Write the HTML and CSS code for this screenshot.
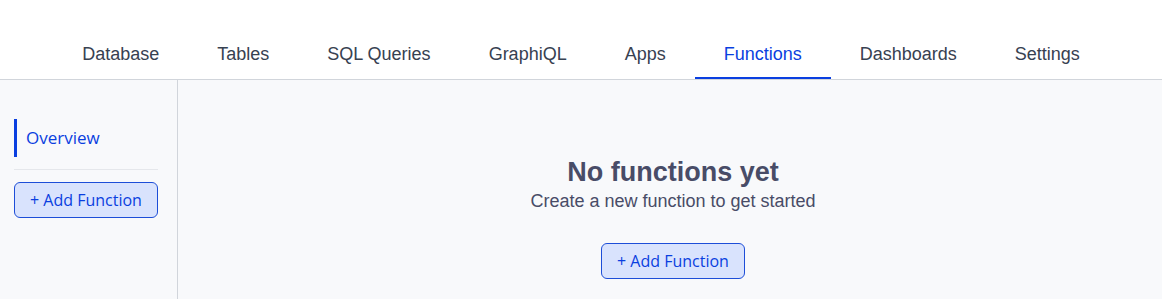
FILE: index.html
```html
<!DOCTYPE html>
<html>
<head>
<meta charset="utf-8">
<link rel="stylesheet" href="styles.css">
</head>
<body>
<header class="topbar">
  <nav class="tabs">
    <a class="tab">Database</a>
    <a class="tab">Tables</a>
    <a class="tab">SQL Queries</a>
    <a class="tab">GraphiQL</a>
    <a class="tab">Apps</a>
    <a class="tab active">Functions</a>
    <a class="tab">Dashboards</a>
    <a class="tab">Settings</a>
  </nav>
</header>
<div class="layout">
  <aside class="sidebar">
    <div class="side-item active">Overview</div>
    <div class="divider"></div>
    <button class="btn">+ Add Function</button>
  </aside>
  <main class="content">
    <h1 class="title">No functions yet</h1>
    <p class="subtitle">Create a new function to get started</p>
    <button class="btn main-btn">+ Add Function</button>
  </main>
</div>
</body>
</html>
```
FILE: styles.css
```css
* { box-sizing: border-box; }
html, body { margin: 0; padding: 0; }
body {
  width: 1162px;
  height: 299px;
  overflow: hidden;
  background: #f8f9fb;
  font-family: "Liberation Sans", Arial, sans-serif;
}
.topbar {
  background: #ffffff;
  border-bottom: 1px solid #d1d5db;
  height: 80px;
  display: flex;
  justify-content: center;
  align-items: flex-end;
}
.tabs {
  display: flex;
}
.tab {
  font-size: 18px;
  color: #374151;
  padding: 0 29px;
  height: 49px;
  line-height: 49px;
  border-bottom: 2px solid transparent;
  display: block;
}
.tab.active {
  color: #0a3fe0;
  border-bottom-color: #0a3fe0;
}
.layout {
  display: flex;
  height: 219px;
}
.sidebar {
  width: 178px;
  border-right: 1px solid #d1d5db;
  padding: 39px 19px 0 14px;
  display: flex;
  flex-direction: column;
}
.side-item {
  font-family: "Open Sans", "Noto Sans", sans-serif;
  font-size: 17px;
  color: #0a3fe0;
  height: 38px;
  line-height: 38px;
  border-left: 3px solid #0a3fe0;
  padding-left: 9px;
}
.divider {
  height: 1px;
  background: #e5e7eb;
  margin: 12px 0 12px 0;
}
.btn {
  font-family: "Open Sans", "Noto Sans", sans-serif;
  font-size: 16px;
  color: #0a3fe0;
  background: #d9e3fd;
  border: 1px solid #1d4ed8;
  border-radius: 6px;
  width: 144px;
  height: 36px;
  padding: 0;
  cursor: pointer;
}
.content {
  flex: 1;
  display: flex;
  flex-direction: column;
  align-items: center;
  padding-top: 76px;
  padding-left: 6px;
}
.title {
  margin: 0;
  font-size: 27px;
  font-weight: bold;
  color: #484c67;
  line-height: 32px;
}
.subtitle {
  margin: 0;
  font-size: 18px;
  color: #484c67;
  line-height: 26px;
}
.main-btn {
  margin-top: 29px;
}
```
